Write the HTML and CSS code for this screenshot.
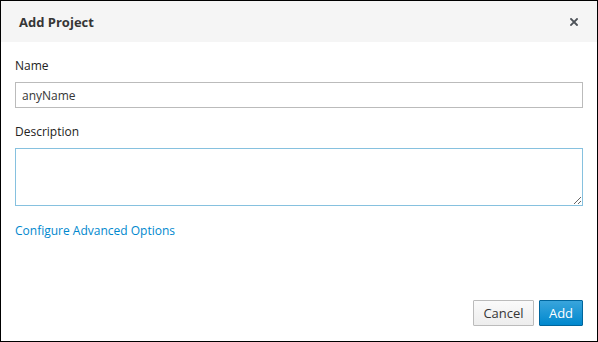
FILE: index.html
```html
<!DOCTYPE html>
<html lang="en">
<head>
  <meta charset="UTF-8" />
  <title>Add Project</title>
  <link rel="stylesheet" href="styles.css">
</head>
<body>
  <div class="modal">
    <div class="modal-header">
      <h4 class="modal-title">Add Project</h4>
      <button class="close" type="button" aria-label="Close">
        <svg width="8" height="8" viewBox="0 0 8 8">
          <path d="M1 1 L7 7 M7 1 L1 7" stroke="#4d5258" stroke-width="1.8" stroke-linecap="square"/>
        </svg>
      </button>
    </div>
    <form class="modal-body">
      <div class="form-group">
        <label for="name">Name</label>
        <input type="text" id="name" value="anyName" />
      </div>
      <div class="form-group">
        <label for="description">Description</label>
        <textarea id="description" class="focused"></textarea>
      </div>
      <a href="#" class="link">Configure Advanced Options</a>
    </form>
    <div class="modal-footer">
      <button type="button" class="btn btn-default">Cancel</button>
      <button type="button" class="btn btn-primary">Add</button>
    </div>
  </div>
</body>
</html>
```

FILE: styles.css
```css
* {
  box-sizing: border-box;
  font-family: 'Open Sans', sans-serif;
}

body {
  margin: 0;
  background: #fff;
  color: #363636;
}

.modal {
  width: 598px;
  height: 342px;
  border: 1px solid #000;
  display: flex;
  flex-direction: column;
}

.modal-header {
  height: 41px;
  background: #f5f5f5;
  display: flex;
  align-items: center;
  justify-content: space-between;
  padding: 0 19px 0 18px;
}

.modal-title {
  margin: 0;
  font-size: 13px;
  font-weight: 700;
  color: #363636;
}

.close {
  border: none;
  background: transparent;
  padding: 0;
  width: 8px;
  height: 8px;
  display: flex;
  cursor: pointer;
}

.modal-body {
  flex: 1;
  padding: 15px 14px 0 14px;
  margin: 0;
}

.form-group {
  margin-bottom: 15px;
}

.form-group:last-of-type {
  margin-bottom: 16px;
}

.form-group label {
  display: block;
  font-size: 12px;
  line-height: 18px;
  font-weight: 400;
  color: #222;
  margin-bottom: 7px;
}

.form-group input,
.form-group textarea {
  display: block;
  width: 100%;
  border: 1px solid #bbb;
  background: #fff;
  font-size: 12px;
  color: #363636;
  padding: 2px 6px;
  outline: none;
}

.form-group input {
  height: 26px;
}

.form-group textarea {
  height: 58px;
  resize: vertical;
}

.form-group textarea.focused {
  border-color: #86c1df;
}

.link {
  display: block;
  font-size: 12px;
  line-height: 18px;
  color: #0088ce;
  text-decoration: none;
}

.modal-footer {
  display: flex;
  justify-content: flex-end;
  gap: 5px;
  padding: 0 14px 15px 0;
}

.btn {
  height: 26px;
  font-size: 13px;
  padding: 0 8px;
  border-radius: 1px;
  cursor: pointer;
}

.btn-default {
  width: 61px;
  background: linear-gradient(#fafafa, #ededed);
  border: 1px solid #bbb;
  color: #363636;
}

.btn-primary {
  width: 44px;
  background: linear-gradient(#39a5dc, #0088ce);
  border: 1px solid #00659c;
  color: #fff;
}
```
